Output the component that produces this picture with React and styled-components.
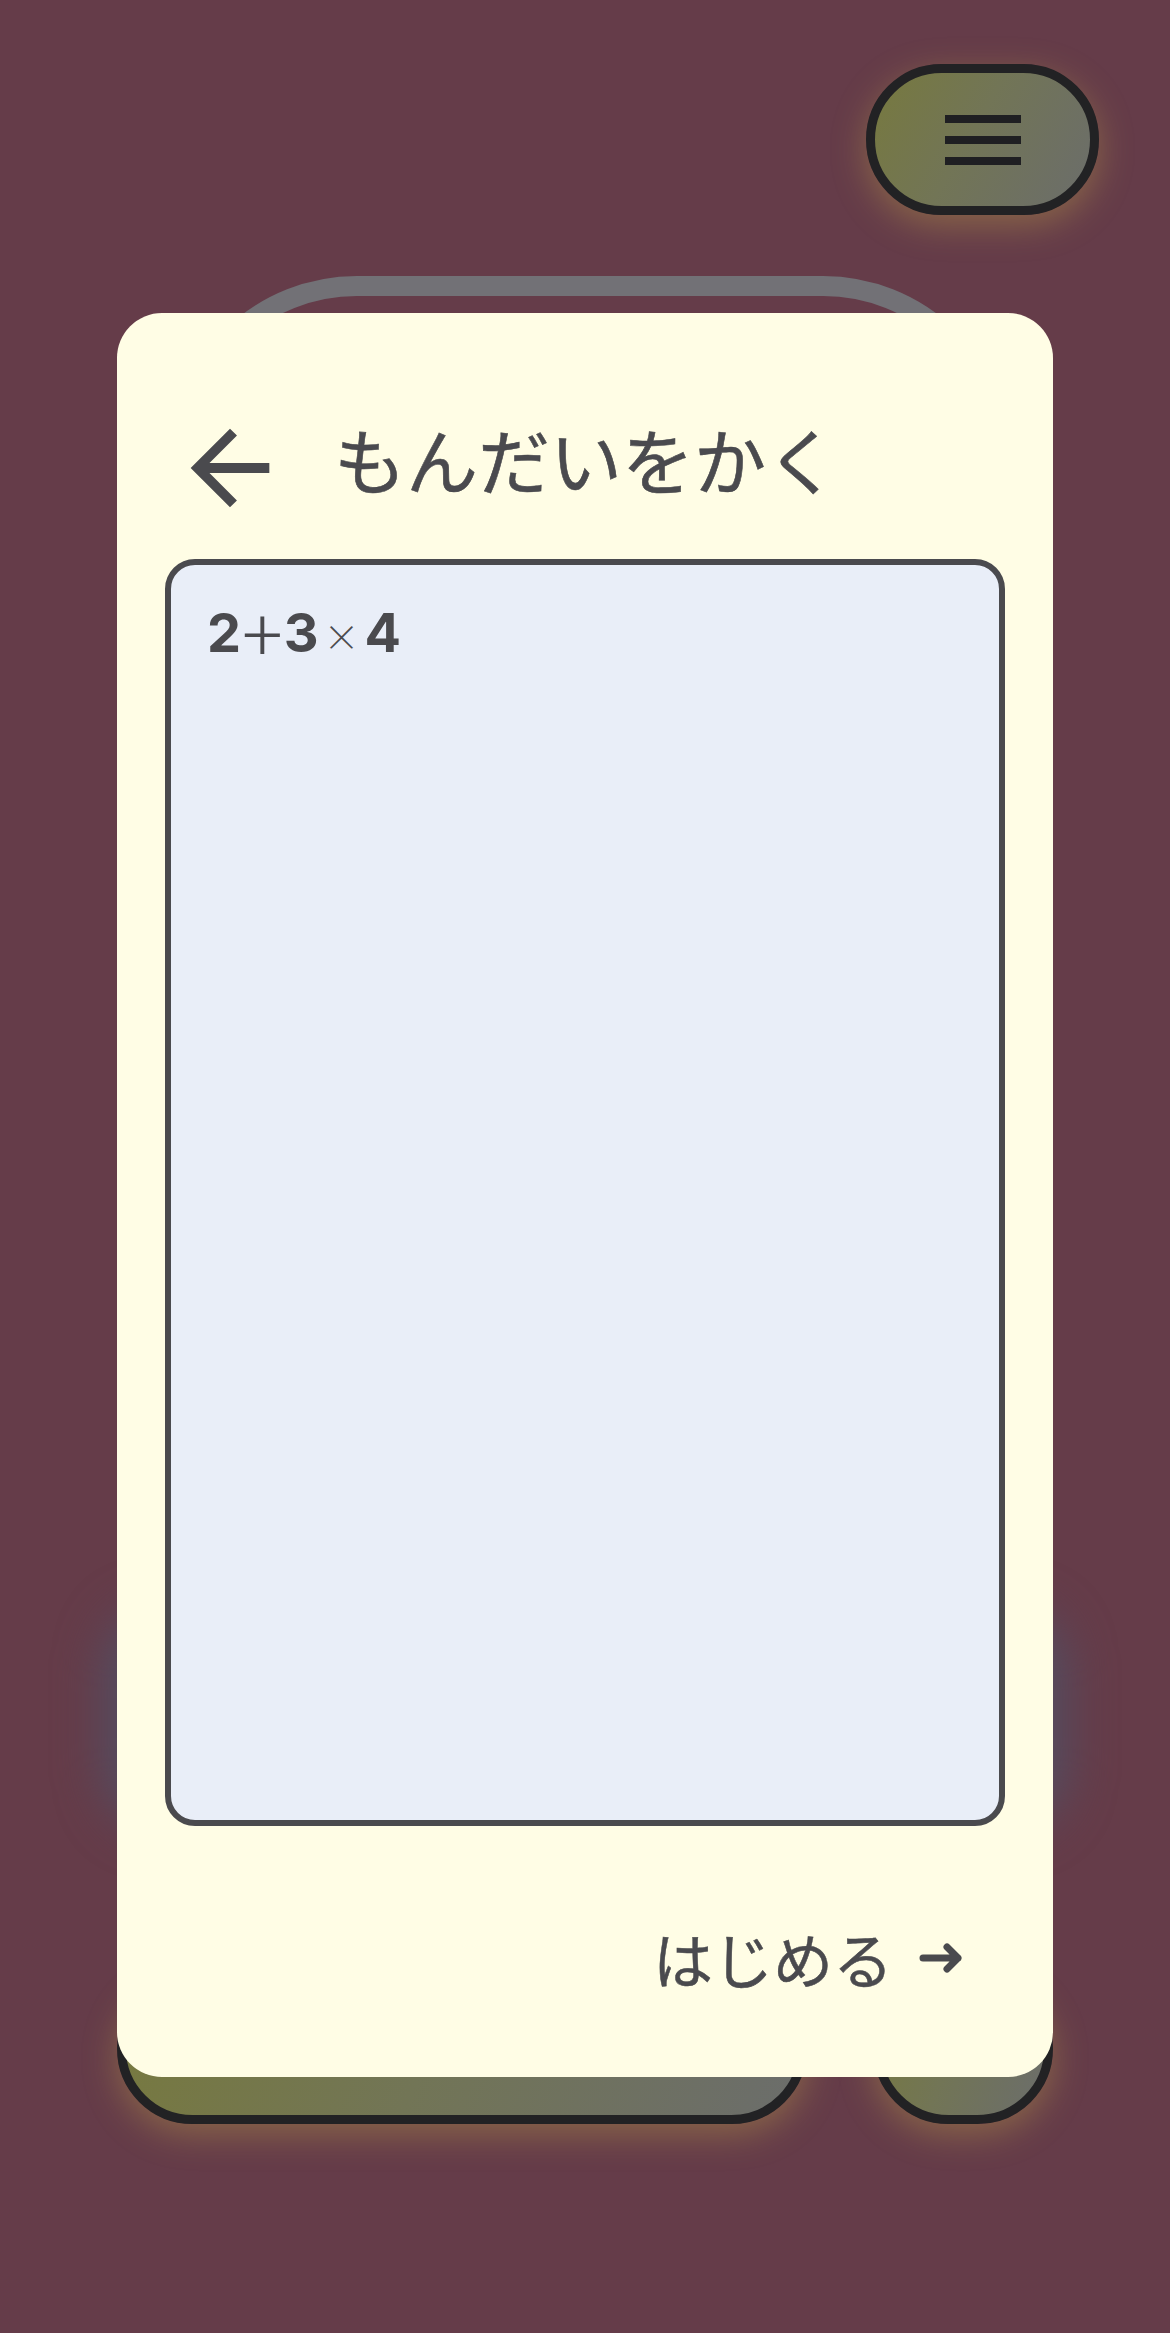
import React from "react";
import styled, { createGlobalStyle } from "styled-components";
import { MdArrowBack } from "react-icons/md";

const GlobalStyle = createGlobalStyle`
  html, body {
    margin: 0;
    padding: 0;
    background: #653c49;
  }
  * {
    box-sizing: border-box;
  }
`;

const Page = styled.div`
  position: relative;
  min-height: 2333px;
  background: #653c49;
  overflow: hidden;
  display: flex;
  flex-direction: column;
  font-family: "Noto Sans CJK JP", "Noto Sans", sans-serif;
  color: #4a4a4e;
`;

const TopBar = styled.header`
  display: flex;
  justify-content: flex-end;
  padding: 64px 71px 0 0;
`;

const Pill = styled.button`
  flex: ${(p) => (p.$grow ? "1" : "none")};
  width: ${(p) => (p.$w ? `${p.$w}px` : "auto")};
  height: 151px;
  padding: 0;
  border: 9px solid #222224;
  border-radius: 76px;
  background: linear-gradient(
    ${(p) => p.$angle || "110deg"},
    #77793f 0%,
    #727556 45%,
    #6b6d6b 100%
  );
  box-shadow: 0 10px 34px rgba(196, 168, 72, 0.38);
  display: flex;
  flex-direction: column;
  align-items: center;
  justify-content: center;
  gap: 13px;
`;

const MenuBar = styled.span`
  display: block;
  width: 76px;
  height: 8px;
  background: #1f1f22;
`;

const Stage = styled.main`
  position: relative;
  margin: 98px 117px 0;
`;

const BackCard = styled.div`
  position: absolute;
  top: -37px;
  left: 50px;
  right: 40px;
  height: 1500px;
  border: 20px solid #727176;
  border-radius: 190px;
`;

const Glow = styled.div`
  position: absolute;
  top: 1295px;
  left: -12px;
  right: -12px;
  height: 220px;
  border-radius: 60px;
  background: #524e62;
  filter: blur(24px);
`;

const Card = styled.section`
  position: relative;
  z-index: 2;
  height: 1764px;
  background: #fffde5;
  border-radius: 45px;
  padding: 0 48px;
  display: flex;
  flex-direction: column;
`;

const Header = styled.div`
  display: flex;
  align-items: center;
  gap: 45px;
  padding: 96px 0 0 6px;
`;

const IconButton = styled.button`
  border: none;
  background: none;
  padding: 0;
  display: flex;
  color: #4a4a4e;
`;

const Title = styled.h1`
  margin: 0;
  font-size: 72px;
  font-weight: 400;
  line-height: 1;
  letter-spacing: 0;
  color: #4a4a4e;
  transform: translateY(-10px);
  -webkit-text-stroke: 0.6px #4a4a4e;
`;

const Editor = styled.div`
  margin-top: 32px;
  height: 1267px;
  border: 6px solid #4a4a4e;
  border-radius: 30px;
  background: #e9eef8;
  padding: 37px 36px;
  font-family: Inter, "Liberation Sans", sans-serif;
  font-size: 54px;
  line-height: 62px;
  color: #4a4a4e;
`;

const Num = styled.span`
  font-weight: 700;
`;

const Op = styled.span`
  font-family: "Noto Sans CJK JP", "DejaVu Sans", sans-serif;
  font-weight: 300;
  font-size: ${(p) => p.$size}px;
  line-height: 0;
  vertical-align: ${(p) => p.$shift || 0}px;
  margin: 0 ${(p) => p.$space}px;
`;

const Footer = styled.div`
  flex: 1;
  display: flex;
  justify-content: flex-end;
  align-items: center;
  padding: 12px 42px 0 0;
`;

const StartButton = styled.button`
  border: none;
  background: none;
  padding: 0;
  display: flex;
  align-items: center;
  gap: 26px;
  font-family: "Noto Sans CJK JP", "Noto Sans", sans-serif;
  font-size: 60px;
  line-height: 1;
  color: #4a4a4e;
  -webkit-text-stroke: 0.5px #4a4a4e;
`;

const BottomBar = styled.div`
  position: relative;
  z-index: 1;
  margin-top: -104px;
  display: flex;
  gap: 66px;
`;

const ArrowRight = () => (
  <svg width="44" height="32" viewBox="0 0 44 32" fill="none">
    <path
      d="M4 16H39M28 5L39 16L28 27"
      stroke="#4a4a4e"
      strokeWidth="7"
      strokeLinecap="round"
      strokeLinejoin="round"
    />
  </svg>
);

export default function App() {
  return (
    <Page>
      <GlobalStyle />
      <TopBar>
        <Pill $w={233} $angle="120deg" aria-label="menu">
          <MenuBar />
          <MenuBar />
          <MenuBar />
        </Pill>
      </TopBar>
      <Stage>
        <BackCard />
        <Glow />
        <Card>
          <Header>
            <IconButton aria-label="back">
              <MdArrowBack size={118} />
            </IconButton>
            <Title>もんだいをかく</Title>
          </Header>
          <Editor>
            <Num>2</Num>
            <Op $size={76} $space={1} $shift={-11}>+</Op>
            <Num>3</Num>
            <Op $size={36} $space={5} $shift={1}>×</Op>
            <Num>4</Num>
          </Editor>
          <Footer>
            <StartButton>
              はじめる
              <ArrowRight />
            </StartButton>
          </Footer>
        </Card>
        <BottomBar>
          <Pill $grow />
          <Pill $w={180} />
        </BottomBar>
      </Stage>
    </Page>
  );
}
